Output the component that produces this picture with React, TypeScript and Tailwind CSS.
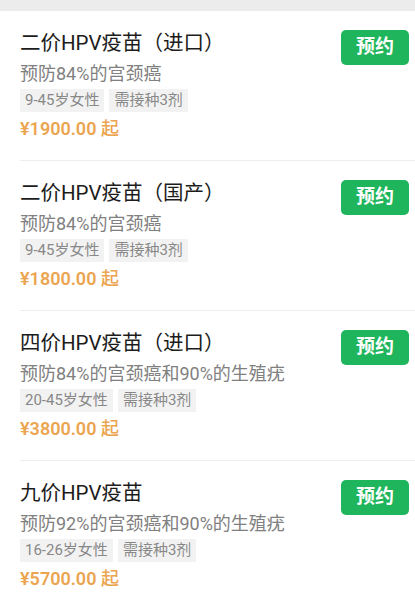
const vaccines = [
  {
    title: "二价HPV疫苗（进口）",
    desc: "预防84%的宫颈癌",
    age: "9-45岁女性",
    doses: "需接种3剂",
    price: "¥1900.00",
  },
  {
    title: "二价HPV疫苗（国产）",
    desc: "预防84%的宫颈癌",
    age: "9-45岁女性",
    doses: "需接种3剂",
    price: "¥1800.00",
  },
  {
    title: "四价HPV疫苗（进口）",
    desc: "预防84%的宫颈癌和90%的生殖疣",
    age: "20-45岁女性",
    doses: "需接种3剂",
    price: "¥3800.00",
  },
  {
    title: "九价HPV疫苗",
    desc: "预防92%的宫颈癌和90%的生殖疣",
    age: "16-26岁女性",
    doses: "需接种3剂",
    price: "¥5700.00",
  },
];

const App = () => {
  return (
    <div
      className="w-[415px] h-[609px] overflow-hidden bg-white"
      style={{ fontFamily: 'Roboto, "Noto Sans CJK SC", sans-serif' }}
    >
      {/* top strip */}
      <div className="h-[11px] bg-[#ececec]" />

      {vaccines.map((v, i) => (
        <div key={v.title} className="pl-5">
          <div
            className={`h-[150px] flex justify-between pt-[18px] pr-[6px] ${
              i < vaccines.length - 1 ? "border-b border-[#eeeeee]" : ""
            }`}
          >
            <div className="flex flex-col">
              <h3 className="text-[20.5px] leading-[28px] text-[#1c1c1c]">
                {v.title}
              </h3>
              <p className="mt-[5px] text-[18px] leading-[24px] text-[#808080]">
                {v.desc}
              </p>
              <div className="mt-[3px] flex gap-[5px]">
                <span className="h-[23px] px-[5px] flex items-center bg-[#f2f2f2] text-[15px] text-[#888888]">
                  {v.age}
                </span>
                <span className="h-[23px] px-[5px] flex items-center bg-[#f2f2f2] text-[15px] text-[#888888]">
                  {v.doses}
                </span>
              </div>
              <p className="mt-[5px] text-[18px] leading-[24px] font-semibold text-[#eba550]">
                {v.price} <span className="font-medium">起</span>
              </p>
            </div>
            <button className="mt-[1px] w-[68px] h-[35px] rounded-[5px] bg-[#1fb55c] text-white text-[19px] font-bold">
              预约
            </button>
          </div>
        </div>
      ))}
    </div>
  );
};

export default App;
